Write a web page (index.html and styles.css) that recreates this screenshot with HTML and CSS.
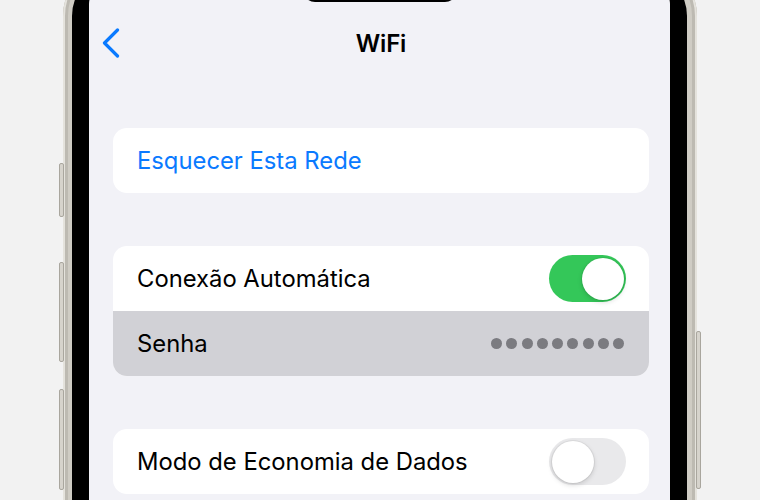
FILE: index.html
```html
<!DOCTYPE html>
<html lang="pt-BR">
<head>
    <meta charset="UTF-8">
    <meta name="viewport" content="width=device-width, initial-scale=1.0">
    <title>WiFi</title>
    <link rel="stylesheet" href="styles.css">
</head>
<body>
    <div class="stage">
        <div class="phone">
            <span class="side-btn action"></span>
            <span class="side-btn vol-up"></span>
            <span class="side-btn vol-down"></span>
            <span class="side-btn power"></span>
            <div class="bezel">
                <div class="screen">
                    <div class="island"></div>
                    <header class="nav">
                        <a class="back" href="#" aria-label="Voltar">
                            <svg width="18" height="30" viewBox="0 0 18 30">
                                <path d="M15.5 2 L2.5 15 L15.5 28" fill="none" stroke="#0a7aff" stroke-width="3.2" stroke-linecap="round" stroke-linejoin="round"/>
                            </svg>
                        </a>
                        <h1 class="title">WiFi</h1>
                        <span></span>
                    </header>

                    <section class="group">
                        <div class="row link">Esquecer Esta Rede</div>
                    </section>

                    <section class="group">
                        <div class="row">
                            <span>Conexão Automática</span>
                            <span class="toggle on"><span class="knob"></span></span>
                        </div>
                        <div class="row selected">
                            <span>Senha</span>
                            <span class="dots">
                                <i></i><i></i><i></i><i></i><i></i><i></i><i></i><i></i><i></i>
                            </span>
                        </div>
                    </section>

                    <section class="group">
                        <div class="row">
                            <span>Modo de Economia de Dados</span>
                            <span class="toggle"><span class="knob"></span></span>
                        </div>
                    </section>
                </div>
            </div>
        </div>
    </div>
</body>
</html>
```

FILE: styles.css
```css
body {
    margin: 0;
    padding: 0;
    background: #f2f2f2;
    font-family: Inter, "Noto Sans", sans-serif;
    overflow: hidden;
}

.stage {
    height: 500px;
    overflow: hidden;
}

/* Phone frame */
.phone {
    position: relative;
    box-sizing: border-box;
    width: 634px;
    margin: -40px auto 0;
    padding: 9px 10px 0 9px;
    border-radius: 56px 56px 0 0;
    background: #cfccc4;
    box-shadow: inset 2px 0 0 #e4e2dc, inset -2px 0 0 #e4e2dc,
                inset 5px 0 0 #bdbab2, inset -5px 0 0 #bdbab2;
}

.side-btn {
    position: absolute;
    width: 3px;
    background: #d6d3cc;
    border: 1px solid #a9a69e;
    border-radius: 2px;
}

.side-btn.action { left: -4px; top: 203px; height: 52px; }
.side-btn.vol-up { left: -4px; top: 302px; height: 98px; }
.side-btn.vol-down { left: -4px; top: 429px; height: 99px; }
.side-btn.power { right: -4px; top: 371px; height: 156px; }

.bezel {
    padding: 17px 17px 0;
    border-radius: 47px 47px 0 0;
    background: #000;
}

.screen {
    position: relative;
    min-height: 620px;
    padding: 34px 21px 0 24px;
    border-radius: 18px 18px 0 0;
    background: #f2f2f7;
}

.island {
    position: absolute;
    top: 0;
    left: 214px;
    width: 154px;
    height: 16px;
    border-radius: 0 0 12px 12px;
    background: #000;
}

/* Navigation bar */
.nav {
    display: grid;
    grid-template-columns: 60px 1fr 60px;
    align-items: center;
    height: 46px;
}

.back {
    display: flex;
    margin-left: -11px;
}

.title {
    margin: 0;
    text-align: center;
    font-size: 24px;
    font-weight: 600;
    color: #000;
    letter-spacing: -0.2px;
}

/* Grouped list */
.group {
    margin-top: 53px;
    border-radius: 14px;
    background: #fff;
    overflow: hidden;
}

.nav + .group {
    margin-top: 62px;
}

.row {
    display: flex;
    align-items: center;
    justify-content: space-between;
    height: 65px;
    padding: 0 23px 0 24px;
    font-size: 23.8px;
    color: #000;
}

.row.link {
    color: #0a7aff;
}

.row.selected {
    background: #d1d1d6;
}

.dots {
    display: flex;
    gap: 4.25px;
    margin-right: 2px;
}

.dots i {
    width: 11px;
    height: 11px;
    border-radius: 50%;
    background: #7b7b80;
}

/* Switches */
.toggle {
    position: relative;
    width: 77px;
    height: 47px;
    border-radius: 24px;
    background: #e9e9eb;
}

.toggle .knob {
    position: absolute;
    top: 2.5px;
    left: 2.5px;
    width: 42px;
    height: 42px;
    border-radius: 50%;
    background: #fff;
    box-shadow: 0 2px 5px rgba(0, 0, 0, 0.15), 0 0 0 1px rgba(0, 0, 0, 0.05);
}

.toggle.on {
    background: #34c759;
}

.toggle.on .knob {
    left: auto;
    right: 2.5px;
}
```
